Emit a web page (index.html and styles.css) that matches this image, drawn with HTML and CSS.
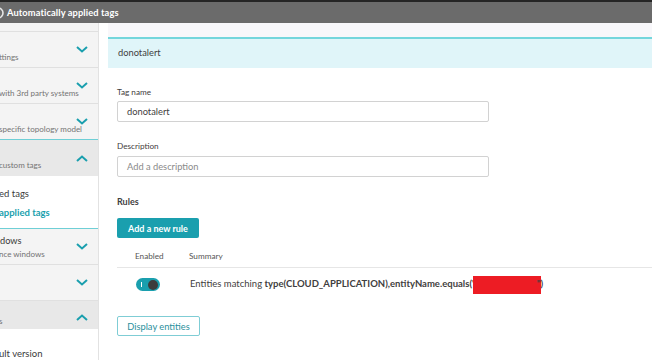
FILE: index.html
```html
<!DOCTYPE html>
<html>
<head>
<meta charset="utf-8">
<link rel="stylesheet" href="styles.css">
</head>
<body>
<div class="topbar">
  <svg class="topicon" width="14" height="14" viewBox="0 0 14 14"><circle cx="7" cy="7" r="5" fill="none" stroke="#e6e6e6" stroke-width="1.6"/><circle cx="7" cy="7" r="1.6" fill="#e6e6e6"/></svg>
  <span class="toptitle">Automatically applied tags</span>
</div>
<div class="page">
  <aside class="sidebar">
    <div class="item item-top"></div>
    <div class="item">
      <div class="texts"><div class="title"></div><div class="sub">ttings</div></div>
      <svg class="chev" width="12" height="7" viewBox="0 0 12 7"><polyline points="1,1 6,5.5 11,1" fill="none" stroke="#1a9fae" stroke-width="2"/></svg>
    </div>
    <div class="item">
      <div class="texts"><div class="title"></div><div class="sub">with 3rd party systems</div></div>
      <svg class="chev" width="12" height="7" viewBox="0 0 12 7"><polyline points="1,1 6,5.5 11,1" fill="none" stroke="#1a9fae" stroke-width="2"/></svg>
    </div>
    <div class="item item-last">
      <div class="texts"><div class="title"></div><div class="sub">specific topology model</div></div>
      <svg class="chev" width="12" height="7" viewBox="0 0 12 7"><polyline points="1,1 6,5.5 11,1" fill="none" stroke="#1a9fae" stroke-width="2"/></svg>
    </div>
    <div class="group">
      <div class="item open">
        <div class="texts"><div class="title"></div><div class="sub">custom tags</div></div>
        <svg class="chev" width="12" height="7" viewBox="0 0 12 7"><polyline points="1,6 6,1.5 11,6" fill="none" stroke="#1a9fae" stroke-width="2"/></svg>
      </div>
      <ul class="sublist">
        <li>ed tags</li>
        <li class="active">applied tags</li>
      </ul>
    </div>
    <div class="item">
      <div class="texts"><div class="title">dows</div><div class="sub">nce windows</div></div>
      <svg class="chev" width="12" height="7" viewBox="0 0 12 7"><polyline points="1,1 6,5.5 11,1" fill="none" stroke="#1a9fae" stroke-width="2"/></svg>
    </div>
    <div class="item">
      <div class="texts"><div class="title"></div><div class="sub"></div></div>
      <svg class="chev" width="12" height="7" viewBox="0 0 12 7"><polyline points="1,1 6,5.5 11,1" fill="none" stroke="#1a9fae" stroke-width="2"/></svg>
    </div>
    <div class="item open short">
      <div class="texts"><div class="title"></div><div class="sub">s</div></div>
      <svg class="chev" width="12" height="7" viewBox="0 0 12 7"><polyline points="1,6 6,1.5 11,6" fill="none" stroke="#1a9fae" stroke-width="2"/></svg>
    </div>
    <ul class="sublist sublist2">
      <li>ult version</li>
    </ul>
  </aside>
  <main class="main">
    <div class="strip"></div>
    <div class="selected">donotalert</div>
    <div class="form">
      <label class="label">Tag name</label>
      <div class="input">donotalert</div>
      <label class="label label2">Description</label>
      <div class="input placeholder">Add a description</div>
      <h3 class="rules">Rules</h3>
      <button class="btn-primary">Add a new rule</button>
      <div class="table">
        <div class="thead">
          <div class="col1">Enabled</div>
          <div class="col2">Summary</div>
        </div>
        <div class="trow">
          <div class="col1"><span class="toggle"><span class="tick"></span><span class="knob"></span></span></div>
          <div class="col2 summary">Entities matching <b>type(CLOUD_APPLICATION),entityName.equals("<span class="redact"></span>")</b></div>
        </div>
      </div>
      <button class="btn-secondary">Display entities</button>
    </div>
  </main>
</div>
</body>
</html>
```

FILE: styles.css
```css
* { box-sizing: border-box; }
html, body { margin: 0; padding: 0; }
body {
  width: 652px;
  height: 360px;
  overflow: hidden;
  background: #fff;
  font-family: Lato, "Open Sans", sans-serif;
  color: #3f4040;
}
.topbar {
  height: 23px;
  border-top: 2px solid #252525;
  background: #6b6b6b;
  display: flex;
  align-items: center;
  overflow: hidden;
}
.topicon { margin-left: -9px; margin-right: 2px; flex: none; }
.toptitle {
  color: #fff;
  font-weight: 700;
  font-size: 9.3px;
  letter-spacing: 0.1px;
}
.page {
  display: flex;
  height: 337px;
}
.sidebar {
  width: 99px;
  flex: none;
  background: #f4f4f4;
  border-right: 1px solid #e2e2e2;
  overflow: hidden;
}
.item {
  height: 36px;
  border-bottom: 1px solid #e0e0e0;
  display: flex;
  align-items: center;
  justify-content: space-between;
  padding-right: 10px;
}
.item-top { height: 9px; }
.item-last { border-bottom: 1px solid #6fcfd6; }
.texts {
  display: flex;
  flex-direction: column;
  min-width: 0;
  white-space: nowrap;
}
.title {
  font-size: 9.2px;
  line-height: 14px;
  height: 14px;
  color: #3a3a3a;
}
.sub {
  font-size: 8px;
  line-height: 12px;
  height: 12px;
  color: #737373;
  margin-left: -1px;
}
.chev { flex: none; }
.open {
  background: #e8e8e8;
  border-bottom: none;
}
.short {
  height: 28px;
  align-items: flex-end;
  padding-bottom: 2px;
}
.short .chev { margin-bottom: 6px; }
.group {
  border-bottom: 1px solid #6fcfd6;
}
.sublist {
  list-style: none;
  margin: 0;
  padding: 8px 0 6px 0;
  background: #fff;
}
.sublist li {
  font-size: 9.5px;
  line-height: 19px;
  height: 19px;
  white-space: nowrap;
  color: #3a3a3a;
  margin-left: -1px;
}
.sublist li.active {
  color: #1a9fae;
  font-weight: 700;
}
.sublist2 { padding-top: 15px; }
.main {
  flex: 1;
  margin-left: 9px;
  min-width: 0;
}
.strip {
  height: 14px;
  background: #f8f7fa;
}
.selected {
  height: 31px;
  border-top: 2px solid #74d6dc;
  background: #e0f5f9;
  font-size: 9.3px;
  line-height: 28px;
  padding-left: 10px;
}
.form {
  padding-left: 9px;
}
.label {
  display: block;
  font-size: 8.2px;
  line-height: 12px;
  margin-top: 18px;
  margin-bottom: 3px;
}
.label2 { margin-bottom: 4px; }
.input {
  width: 372px;
  height: 21px;
  border: 1px solid #d2d2d2;
  border-radius: 2px;
  font-size: 9.3px;
  line-height: 19px;
  padding-left: 9px;
}
.placeholder { color: #8a8a8a; }
.rules {
  margin: 18px 0 9px 0;
  font-size: 9px;
  line-height: 14px;
  font-weight: 700;
}
.btn-primary {
  display: block;
  width: 82px;
  height: 20px;
  border: none;
  border-radius: 2px;
  background: #1a9fae;
  color: #fff;
  font-family: inherit;
  font-size: 9px;
  font-weight: 700;
  padding: 0;
}
.table {
  margin-top: 12px;
}
.thead {
  display: flex;
  height: 18px;
  border-bottom: 1px solid #e6e6e6;
  font-size: 8.2px;
  line-height: 12px;
  color: #555;
}
.col1 { width: 72px; flex: none; padding-left: 18px; }
.col2 { flex: 1; white-space: nowrap; }
.trow {
  display: flex;
  height: 33px;
  align-items: center;
}
.toggle {
  display: flex;
  align-items: center;
  width: 24px;
  height: 13px;
  border-radius: 7px;
  background: #1a9fae;
  margin-left: 1px;
}
.tick {
  width: 1px;
  height: 5px;
  background: #fff;
  margin-left: 5px;
}
.knob {
  width: 10px;
  height: 10px;
  border-radius: 50%;
  background: #3d3d3d;
  margin-left: 6px;
}
.summary {
  font-size: 9.5px;
  padding-left: 1px;
}
.summary b { font-weight: 700; }
.redact {
  display: inline-block;
  width: 68px;
  height: 18px;
  background: #ed1c24;
  vertical-align: middle;
  margin-left: -3px;
  margin-right: -4px;
}
.btn-secondary {
  display: block;
  margin-top: 15px;
  width: 83px;
  height: 20px;
  border: 1px solid #7fcdd5;
  border-radius: 2px;
  background: #fff;
  color: #2a8f9c;
  font-family: inherit;
  font-size: 9.3px;
  padding: 0;
}
```
